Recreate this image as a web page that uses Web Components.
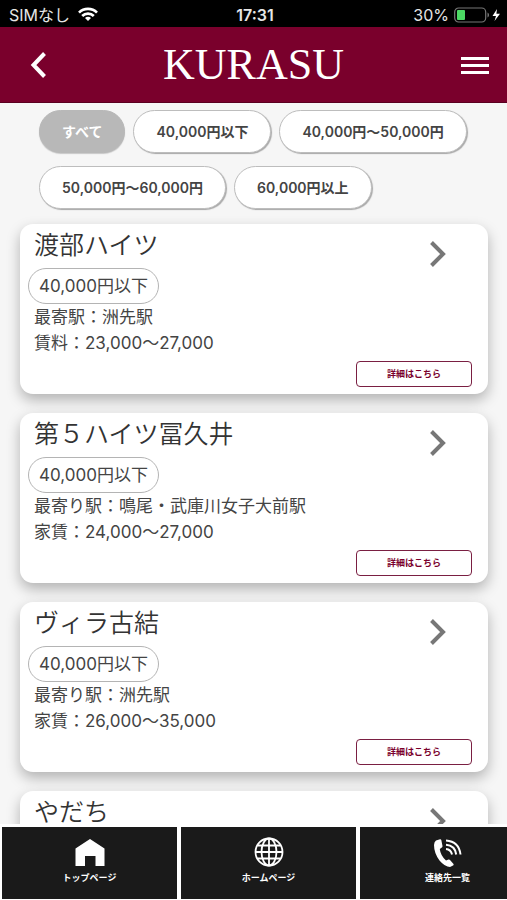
<!DOCTYPE html>
<html lang="ja">
<head>
<meta charset="utf-8">
<meta name="viewport" content="width=device-width, initial-scale=1">
<title>KURASU</title>
<style>
	html, body{
		height:100%;
		margin:0;
	}
	body{
		font-family: Inter, "Noto Sans CJK JP", sans-serif;
		color:#444;
		background:#f6f6f6;
	}
</style>
</head>
<body>
<kurasu-app></kurasu-app>

<script>
(function(d){

	function makeTemplate(html){
		const template = d.createElement('template');
		template.innerHTML = html;
		return template;
	}

	class BaseElement extends HTMLElement{
		constructor(){
			super();
			this.attachShadow({ mode: 'open' });
			this.shadowRoot.appendChild(this.constructor.template.content.cloneNode(true));
		}
	}


	//////////////////////
	// status bar

	class StatusBar extends BaseElement{}
	StatusBar.template = makeTemplate(`
	<style>
		:host{
			display:grid;
			grid-template-columns:1fr auto 1fr;
			align-items:center;
			flex:none;
			height:27px;
			padding:2px 6px 0 9px;
			box-sizing:border-box;
			background:#000;
			color:#e6e6e6;
			font-size:16px;
			line-height:24px;
		}
		.side{
			display:flex;
			align-items:center;
			gap:8px;
		}
		.right{
			justify-content:flex-end;
			gap:5px;
		}
		.time{
			font-weight:600;
		}
		svg{
			display:block;
		}
	</style>
	<div class="side">
		<span>SIMなし</span>
		<svg width="20" height="15" viewBox="0 0 20 15" fill="none" stroke="#fff" stroke-width="2.7">
			<path d="M1 5.6a12.8 12.8 0 0 1 18 0"/>
			<path d="M4.2 9a8.2 8.2 0 0 1 11.6 0"/>
			<path d="M10 14l-3-3a4.2 4.2 0 0 1 6 0z" fill="#fff" stroke="none"/>
		</svg>
	</div>
	<span class="time">17:31</span>
	<div class="side right">
		<span>30%</span>
		<svg width="47" height="16" viewBox="0 0 47 16">
			<rect x="0.7" y="1" width="31" height="14" rx="4" fill="none" stroke="#777" stroke-width="1.2"/>
			<rect x="3" y="3" width="8" height="10" rx="1" fill="#4cd964"/>
			<path d="M33.5 5.5c2 .8 2 4.200 0 5z" fill="#777"/>
			<path d="M43 2l-4.500 7h3.500l-1.500 5 5.500-7.200h-3.600z" fill="#fff"/>
		</svg>
	</div>
	`);
	window.customElements.define('status-bar', StatusBar);


	//////////////////////
	// header

	class AppHeader extends BaseElement{}
	AppHeader.template = makeTemplate(`
	<style>
		:host{
			display:flex;
			align-items:center;
			justify-content:space-between;
			flex:none;
			height:76px;
			padding:0 12px;
			box-sizing:border-box;
			border-bottom:1px solid #5a0020;
			background:#7a002c;
			color:#fff;
		}
		h1{
			margin:0;
			font-family:"Liberation Serif", serif;
			font-size:44px;
			font-weight:400;
			line-height:56px;
		}
		button{
			width:52px;
			height:52px;
			padding:0;
			border:0;
			background:none;
			cursor:pointer;
		}
		svg{
			display:block;
			margin:0 auto;
		}
		.menu svg{
			margin-right:6px;
		}
	</style>
	<button type="button" aria-label="戻る">
		<svg width="18" height="28" viewBox="0 0 18 28" fill="none" stroke="#fff" stroke-width="4">
			<path d="M15.500 2.500L4.500 14l11 11.500"/>
		</svg>
	</button>
	<h1><slot></slot></h1>
	<button type="button" class="menu" aria-label="メニュー">
		<svg width="28" height="18" viewBox="0 0 28 18" fill="#fff">
			<path d="M0 1h28v3H0zM0 8h28v3H0zM0 15h28v3H0z"/>
		</svg>
	</button>
	`);
	window.customElements.define('app-header', AppHeader);


	//////////////////////
	// rent filter

	class FilterChip extends BaseElement{
		connectedCallback(){
			this.shadowRoot.querySelector('button').setAttribute('aria-pressed', this.hasAttribute('selected'));
		}
	}
	FilterChip.template = makeTemplate(`
	<style>
		:host{
			display:block;
		}
		button{
			height:43px;
			padding:0 22px;
			border:1px solid #bdbdbd;
			border-radius:22px;
			background:#fff;
			box-shadow:1px 1px 1px #a8a8a8;
			color:#444;
			font-family:inherit;
			font-size:14px;
			font-weight:600;
			line-height:20px;
			white-space:nowrap;
			cursor:pointer;
		}
		:host([selected]) button{
			border-color:#b8b8b8;
			background:#b8b8b8;
			box-shadow:0 1px 1px #c8c8c8;
			color:#fff;
		}
	</style>
	<button type="button"><slot></slot></button>
	`);
	window.customElements.define('filter-chip', FilterChip);


	//////////////////////
	// property card

	class PropertyCard extends BaseElement{
		connectedCallback(){
			const link = this.shadowRoot.querySelector('a');
			link.hidden = !this.hasAttribute('href');
			link.href = this.getAttribute('href') || '';
		}
	}
	PropertyCard.template = makeTemplate(`
	<style>
		:host{
			display:flex;
			flex-direction:column;
			min-height:170px;
			padding:9px 16px 7px 14px;
			box-sizing:border-box;
			border-radius:13px;
			background:#fff;
			box-shadow:0 6px 14px rgba(0,0,0,.28);
		}
		.top{
			display:flex;
			justify-content:space-between;
			align-items:flex-start;
		}
		h2{
			margin:0;
			font-size:25px;
			font-weight:350;
			line-height:24px;
			color:#333;
		}
		svg{
			display:block;
			flex:none;
			margin:7px 25px 0 0;
		}
		.rank{
			align-self:flex-start;
			margin:0 0 0 -6px;
			padding:0 10px;
			border:1px solid #b4b4b4;
			border-radius:18px;
			font-size:17px;
			line-height:34px;
		}
		.info{
			font-size:17px;
			line-height:26px;
		}
		a{
			align-self:flex-end;
			width:116px;
			margin-top:auto;
			border:1px solid #7a1f42;
			border-radius:4px;
			box-sizing:border-box;
			color:#7a002c;
			font-size:9px;
			font-weight:700;
			line-height:24px;
			text-align:center;
			text-decoration:none;
		}
		a[hidden]{
			display:none;
		}
	</style>
	<div class="top">
		<h2><slot name="title"></slot></h2>
		<svg width="18" height="28" viewBox="0 0 18 28" fill="none" stroke="#777" stroke-width="4">
			<path d="M2.500 2.500L14 14 2.500 25.500"/>
		</svg>
	</div>
	<div class="rank"><slot name="rank"></slot></div>
	<div class="info"><slot name="station"></slot></div>
	<div class="info"><slot name="rent"></slot></div>
	<a>詳細はこちら</a>
	`);
	window.customElements.define('property-card', PropertyCard);


	//////////////////////
	// bottom navigation

	class NavItem extends BaseElement{}
	NavItem.template = makeTemplate(`
	<style>
		:host{
			display:block;
			flex:0 0 175px;
		}
		a{
			display:flex;
			flex-direction:column;
			align-items:center;
			gap:4px;
			height:72px;
			padding-top:10px;
			box-sizing:border-box;
			background:#1a1a1a;
			color:#fff;
			font-size:9px;
			font-weight:700;
			line-height:14px;
			text-decoration:none;
		}
	</style>
	<a href="#"><slot name="icon"></slot><slot></slot></a>
	`);
	window.customElements.define('nav-item', NavItem);

	class BottomNav extends BaseElement{}
	BottomNav.template = makeTemplate(`
	<style>
		:host{
			display:flex;
			flex:none;
			gap:4px;
			padding:3px 0 1px 2px;
			overflow:hidden;
			background:#fff;
		}
	</style>
	<slot></slot>
	`);
	window.customElements.define('bottom-nav', BottomNav);


	//////////////////////
	// app

	class KurasuApp extends BaseElement{}
	KurasuApp.template = makeTemplate(`
	<style>
		:host{
			display:flex;
			flex-direction:column;
			height:100vh;
			overflow:hidden;
		}
		main{
			flex:1;
			min-height:0;
			overflow-y:auto;
			scrollbar-width:none;
		}
		.filters{
			display:flex;
			flex-wrap:wrap;
			gap:13px 8px;
			padding:7px 32px 0 39px;
		}
		.cards{
			display:flex;
			flex-direction:column;
			gap:19px;
			padding:15px 19px 19px 20px;
		}
	</style>
	<status-bar></status-bar>
	<app-header>KURASU</app-header>
	<main>
		<div class="filters">
			<filter-chip selected>すべて</filter-chip>
			<filter-chip>40,000円以下</filter-chip>
			<filter-chip>40,000円〜50,000円</filter-chip>
			<filter-chip>50,000円〜60,000円</filter-chip>
			<filter-chip>60,000円以上</filter-chip>
		</div>
		<div class="cards">
			<property-card href="#1">
				<span slot="title">渡部ハイツ</span>
				<span slot="rank">40,000円以下</span>
				<span slot="station">最寄駅：洲先駅</span>
				<span slot="rent">賃料：23,000〜27,000</span>
			</property-card>
			<property-card href="#2">
				<span slot="title">第５ハイツ冨久井</span>
				<span slot="rank">40,000円以下</span>
				<span slot="station">最寄り駅：鳴尾・武庫川女子大前駅</span>
				<span slot="rent">家賃：24,000〜27,000</span>
			</property-card>
			<property-card href="#3">
				<span slot="title">ヴィラ古結</span>
				<span slot="rank">40,000円以下</span>
				<span slot="station">最寄り駅：洲先駅</span>
				<span slot="rent">家賃：26,000〜35,000</span>
			</property-card>
			<property-card>
				<span slot="title">やだち</span>
			</property-card>
		</div>
	</main>
	<bottom-nav>
		<nav-item>
			<svg slot="icon" width="30" height="30" viewBox="0 0 30 30" fill="#fff">
				<path d="M15 2L29.500 11.500V29H20.500V19H10V29H0.500V11.500z"/>
			</svg>
			トップページ
		</nav-item>
		<nav-item>
			<svg slot="icon" width="30" height="30" viewBox="0 0 30 30" fill="none" stroke="#fff" stroke-width="1.8">
				<circle cx="15" cy="15" r="13.500"/>
				<ellipse cx="15" cy="15" rx="7.500" ry="13.500"/>
				<path d="M15 1.500v27M1.500 15h27M3.500 8.500h23M3.500 21.500h23"/>
			</svg>
			ホームページ
		</nav-item>
		<nav-item>
			<svg slot="icon" width="30" height="30" viewBox="0 0 30 30" fill="none" stroke="#fff" stroke-width="2">
				<path d="M3 3.500L7 2.200Q8 2 8.300 3L9.500 9Q9.600 10 8.800 10.500L6.800 12Q7.500 18.500 13 23.500L15.500 22.600Q16.500 22.300 17 23L20.500 27Q21 28 20 28.500L17 30Q12 30 6.500 23.500Q1 16 1 8Q1.200 4.800 3 3.500z" fill="#fff" stroke="none"/>
				<path d="M13 12q5 .5 6 5.500M13 7.800q9 .7 10.200 9.700M13 3.500q13 1 14.500 14"/>
			</svg>
			連絡先一覧
		</nav-item>
	</bottom-nav>
	`);
	window.customElements.define('kurasu-app', KurasuApp);

})(document);
</script>
</body>
</html>
